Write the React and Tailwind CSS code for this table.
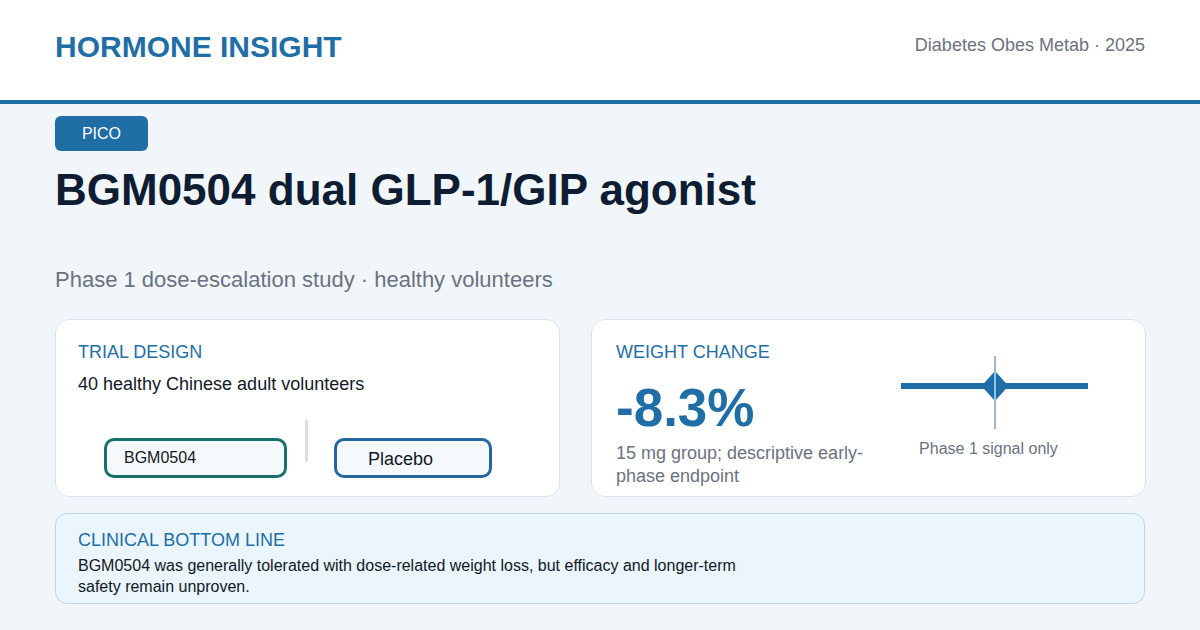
import React from 'react';

function SignalChart() {
    // forest-plot style point estimate with a null line
    return (
        <svg width="187" height="73" viewBox="0 0 187 73">
            <rect x="0" y="27" width="187" height="6" fill="#1f6ea6" />
            <polygon points="94,15 107.5,30 94,45 80.5,30" fill="#1f6ea6" />
            <line x1="94" y1="0" x2="94" y2="73" stroke="#a7b7c8" strokeWidth="2" />
            <line x1="94" y1="16" x2="94" y2="44" stroke="#8cc6ec" strokeWidth="2" />
        </svg>
    );
}

export default function App() {
    return (
        <div className="w-[1200px] h-[630px] overflow-hidden bg-[#f1f6fb] font-['Liberation_Sans',Arial,sans-serif]">
            {/* HEADER */}
            <div className="h-[104px] bg-white border-b-4 border-[#1f6ea6] px-[55px] flex items-center justify-between">
                <div className="text-[30px] font-bold text-[#1f6ea6] leading-none pb-[6px]">HORMONE INSIGHT</div>
                <div className="text-[18px] text-[#6b7280] leading-none pb-[10px]">Diabetes Obes Metab · 2025</div>
            </div>

            <div className="px-[55px] pt-[12px]">
                <div className="w-[93px] h-[35px] rounded-[6px] bg-[#1f6ea6] text-white text-[16px] flex items-center justify-center">
                    PICO
                </div>

                <h1 className="mt-[17px] text-[44px] leading-none font-bold text-[#0f1d33]">
                    BGM0504 dual GLP-1/GIP agonist
                </h1>

                <p className="mt-[55px] text-[22px] leading-[26px] text-[#6b7280]">
                    Phase 1 dose-escalation study · healthy volunteers
                </p>

                {/* CARDS */}
                <div className="mt-[26px] grid grid-cols-[505px_555px] gap-[31px]">
                    <div className="h-[178px] bg-white border border-[#d9e2ea] rounded-[14px] pl-[22px] pt-[22px]">
                        <div className="text-[18px] leading-[1.2] text-[#1f6ea6]">TRIAL DESIGN</div>
                        <div className="mt-[10px] text-[16px] leading-[1.2] text-[#111827] text-[18px]">40 healthy Chinese adult volunteers</div>
                        <div className="mt-[25px] flex items-start">
                            <div className="ml-[26px] mt-[18px] w-[183px] h-[40px] rounded-[10px] border-[3px] border-[#17706c] bg-[#f6f9fc] pl-[17px] flex items-center text-[16px] text-[#111827]">
                                BGM0504
                            </div>
                            <div className="ml-[18px] w-[3px] h-[42px] bg-[#dcdfe3]" />
                            <div className="ml-[26px] mt-[18px] w-[158px] h-[40px] rounded-[10px] border-[3px] border-[#2366a0] bg-[#f6f9fc] pl-[31px] flex items-center text-[18px] text-[#111827] pt-[2px]">
                                Placebo
                            </div>
                        </div>
                    </div>

                    <div className="h-[178px] bg-white border border-[#d9e2ea] rounded-[14px] pl-[24px] pt-[22px] flex items-start">
                        <div className="w-[285px]">
                            <div className="text-[18px] leading-[1.2] text-[#1f6ea6]">WEIGHT CHANGE</div>
                            <div className="mt-[17px] text-[53px] leading-none font-bold text-[#1f6ea6]">-8.3%</div>
                            <div className="mt-[8px] w-[260px] text-[18px] leading-[23px] text-[#6b7280]">
                                15 mg group; descriptive early-phase endpoint
                            </div>
                        </div>
                        <div className="mt-[14px] w-[187px] flex flex-col items-center">
                            <SignalChart />
                            <div className="mt-[10px] pr-[12px] text-[16px] leading-[20px] text-[#6b7280]">Phase 1 signal only</div>
                        </div>
                    </div>
                </div>

                {/* BOTTOM LINE */}
                <div className="mt-[16px] h-[91px] rounded-[12px] border-[1.5px] border-[#bdd6ec] bg-[#eaf5fd] pl-[22px] pt-[16px]">
                    <div className="text-[18px] leading-[1.2] text-[#1f6ea6]">CLINICAL BOTTOM LINE</div>
                    <p className="mt-[3px] max-w-[680px] text-[16px] leading-[21px] text-[#111827]">
                        BGM0504 was generally tolerated with dose-related weight loss, but efficacy and longer-term safety remain unproven.
                    </p>
                </div>
            </div>
        </div>
    );
}
